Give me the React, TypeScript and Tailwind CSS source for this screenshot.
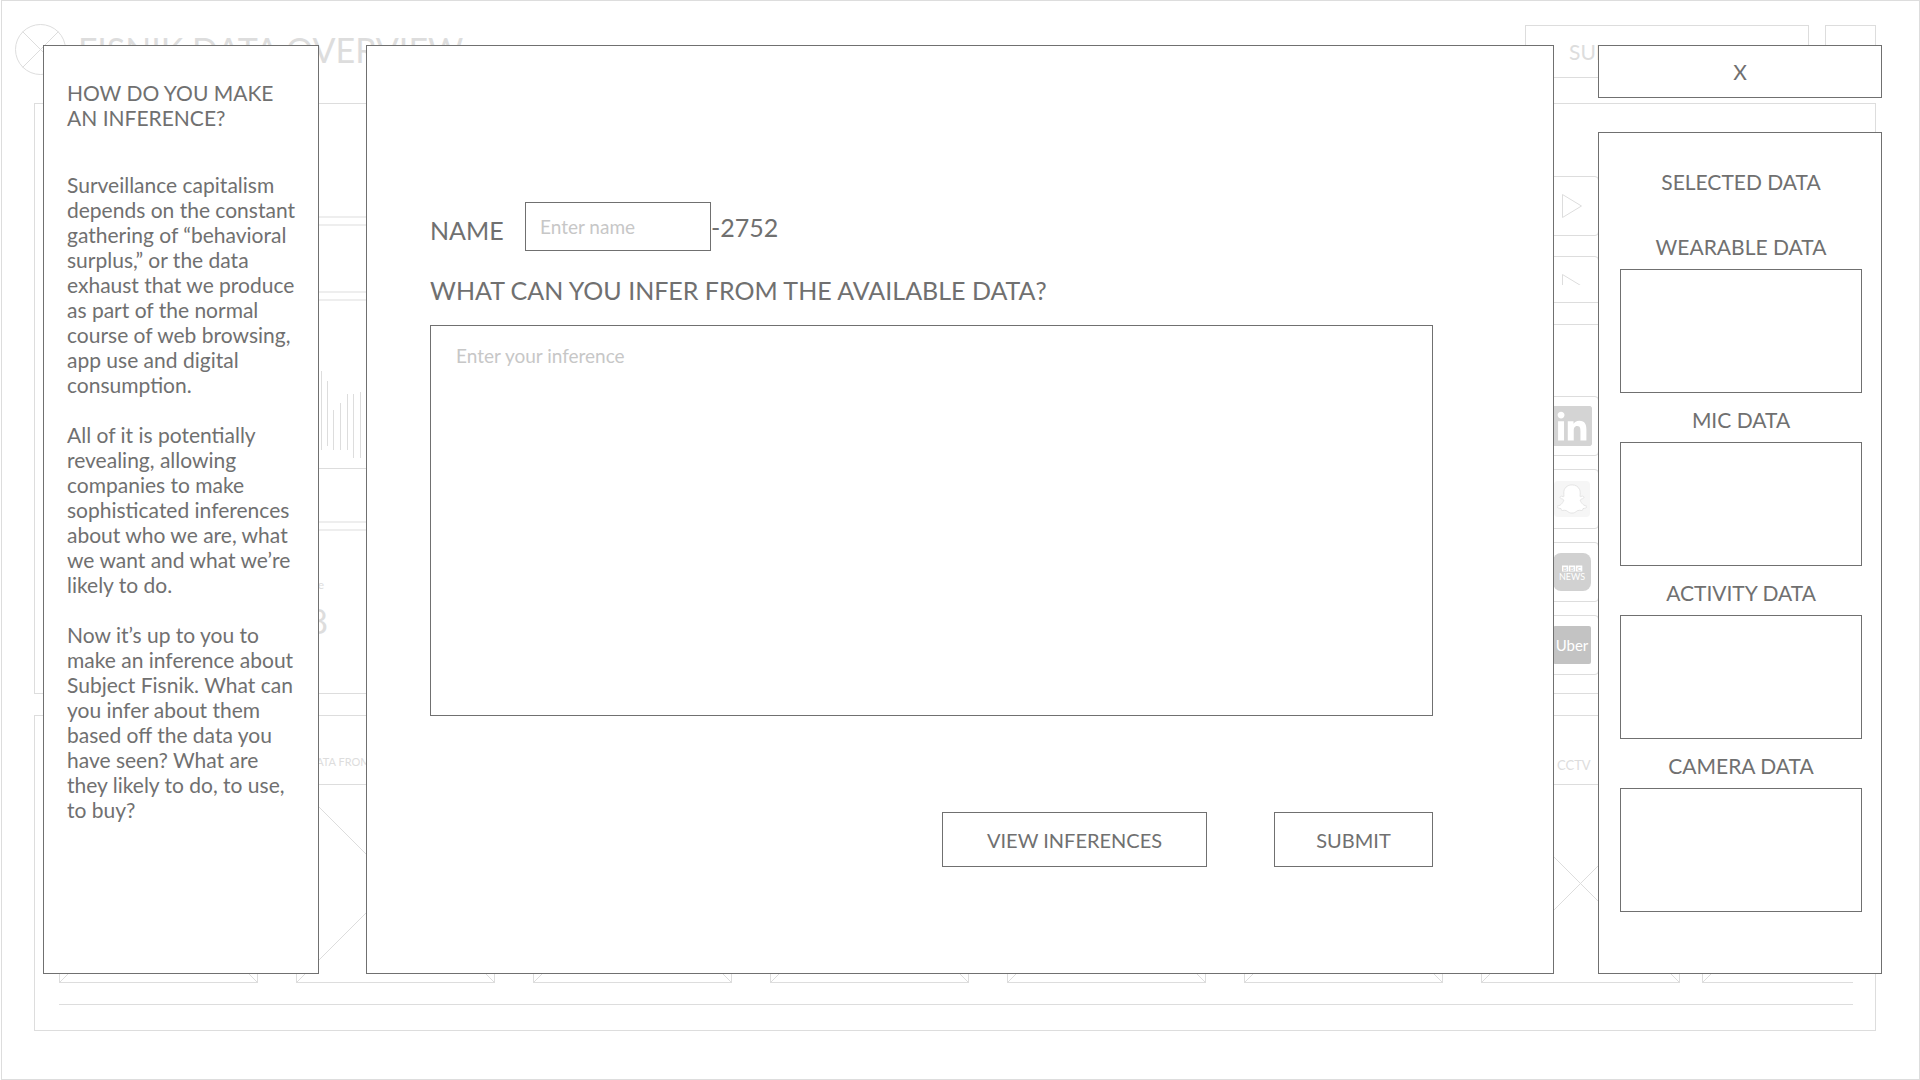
import { FaLinkedin, FaSnapchatGhost } from "react-icons/fa";

const waveBars = [
  { x: 259, top: 371, bottom: 450 },
  { x: 265, top: 381, bottom: 446 },
  { x: 271, top: 410, bottom: 450 },
  { x: 278, top: 403, bottom: 450 },
  { x: 285, top: 394, bottom: 450 },
  { x: 291, top: 394, bottom: 458 },
  { x: 298, top: 392, bottom: 458 },
];

const cameras = [
  { id: 1, label: "", labelClass: "" },
  { id: 2, label: "DATA FROM", labelClass: "pl-3 pt-[38px] text-[11px]" },
  { id: 3, label: "", labelClass: "" },
  { id: 4, label: "", labelClass: "" },
  { id: 5, label: "", labelClass: "" },
  { id: 6, label: "", labelClass: "" },
  { id: 7, label: "CCTV", labelClass: "pl-[76px] pt-10 text-[13px]" },
  { id: 8, label: "", labelClass: "" },
];

const selectedData = ["WEARABLE DATA", "MIC DATA", "ACTIVITY DATA", "CAMERA DATA"];

function PlayIcon() {
  return (
    <svg className="shrink-0" width="20" height="24" viewBox="0 0 20 24" fill="none" stroke="#dddddd">
      <path d="M0.5 0.5V23.5L19.5 12Z" />
    </svg>
  );
}

function BbcIcon() {
  return (
    <svg width="38" height="38" viewBox="0 0 38 38">
      <rect width="38" height="38" rx="8" fill="#d1d1d1" />
      <g fill="#ffffff">
        <rect x="9" y="12.5" width="6.3" height="6" />
        <rect x="16" y="12.5" width="6.3" height="6" />
        <rect x="23" y="12.5" width="6.3" height="6" />
      </g>
      <g fill="#d1d1d1" fontFamily="Lato, sans-serif" fontSize="6" fontWeight="700" textAnchor="middle">
        <text x="12.1" y="17.6">B</text>
        <text x="19.1" y="17.6">B</text>
        <text x="26.1" y="17.6">C</text>
      </g>
      <text x="19" y="26.5" fill="#ffffff" fontFamily="Lato, sans-serif" fontSize="9" textAnchor="middle">
        NEWS
      </text>
    </svg>
  );
}

function UberIcon() {
  return (
    <svg width="38" height="38" viewBox="0 0 38 38">
      <rect width="38" height="38" rx="2" fill="#c3c3c3" />
      <text x="19" y="25" fill="#ffffff" fontFamily="Lato, sans-serif" fontSize="15" textAnchor="middle">
        Uber
      </text>
    </svg>
  );
}

function SnapchatIcon() {
  return (
    <div className="flex size-9 items-center justify-center rounded bg-[#f6f6f6]">
      <FaSnapchatGhost size={30} color="#ffffff" stroke="#e2e2e2" strokeWidth={16} />
    </div>
  );
}

function Dashboard() {
  return (
    <div className="ml-px flex min-h-screen flex-col border border-[#dddddd] text-[#dddddd]">
      <header className="flex items-start pt-6 pl-[13px] pr-[43px]">
        <svg className="-mt-px" width="51" height="51" viewBox="0 0 51 51" fill="none" stroke="#dddddd">
          <circle cx="25.5" cy="25.5" r="25" />
          <path d="M7.5 7.5L43.5 43.5M43.5 7.5L7.5 43.5" />
        </svg>
        <h1 className="mt-[5px] ml-3 text-[34px] leading-10">FISNIK DATA OVERVIEW</h1>
        <button
          type="button"
          className="ml-auto h-[53px] w-[284px] border border-[#dddddd] pl-[43px] text-left text-[21px]"
        >
          SUBMIT
        </button>
        <div className="ml-4 h-[53px] w-[51px] border border-[#dddddd]" />
      </header>

      <section className="mt-[25px] mr-[43px] ml-8 flex h-[591px] justify-between border border-[#dddddd]">
        <div className="ml-[25px] flex w-[600px] flex-col gap-[6px]">
          <div className="h-[114px] border-x-2 border-b-2 border-[#eeeeee]" />
          <div className="h-[69px] border-2 border-[#eeeeee]" />
          <div className="h-[224px] border-2 border-[#eeeeee]">
            <div className="border-b border-[#dddddd]">
              <svg className="block" width="306" height="167" viewBox="0 301 306 167" stroke="#dddddd">
                {waveBars.map((bar) => (
                  <path key={bar.x} d={`M${bar.x + 0.5} ${bar.top}V${bar.bottom}`} />
                ))}
              </svg>
            </div>
          </div>
          <div className="flex-1 border-x-2 border-t-2 border-[#eeeeee] pt-[46px]">
            <div className="w-[266px] text-right">
              <p className="pr-1 text-[12px] leading-4">rate</p>
              <p className="mt-2 text-[34px] leading-10">78</p>
            </div>
          </div>
        </div>

        <div className="mr-[276px] w-[300px] pt-[72px]">
          <div className="flex h-[60px] items-center justify-end rounded border border-[#dddddd] pr-4">
            <PlayIcon />
          </div>
          <div className="mt-5 h-[47px] rounded-t border border-[#dddddd] pt-[17px] pr-4">
            <div className="flex h-[11px] items-start justify-end overflow-hidden">
              <PlayIcon />
            </div>
          </div>
          <div className="mt-[21px] flex flex-col gap-[13px] border-t border-[#dddddd] pt-[71px]">
            <div className="flex h-[60px] items-center justify-end rounded border border-[#dddddd] pr-[6px]">
              <div className="flex size-10 items-center justify-center overflow-hidden">
                <FaLinkedin className="shrink-0" size={46} color="#d4d4d4" />
              </div>
            </div>
            <div className="flex h-[60px] items-center justify-end rounded border border-[#dddddd] pr-[6px]">
              <div className="flex size-10 items-center justify-center">
                <SnapchatIcon />
              </div>
            </div>
            <div className="flex h-[60px] items-center justify-end rounded border border-[#dddddd] pr-[6px]">
              <div className="flex size-10 items-center justify-center">
                <BbcIcon />
              </div>
            </div>
            <div className="flex h-[60px] items-center justify-end rounded border border-[#dddddd] pr-[6px]">
              <div className="flex size-10 items-center justify-center">
                <UberIcon />
              </div>
            </div>
          </div>
        </div>
      </section>

      <section className="mt-[21px] mr-[43px] mb-12 ml-8 border border-[#dddddd] pr-[22px] pb-[25px] pl-6">
        <div className="flex gap-[38px] overflow-hidden">
          {cameras.map((camera) => (
            <figure key={camera.id} className="w-[199px] shrink-0 last:-ml-4">
              <figcaption className="h-[68px]">
                <p className={camera.labelClass}>{camera.label}</p>
              </figcaption>
              <svg className="block" width="199" height="199" viewBox="0 0 199 199" fill="none" stroke="#dddddd">
                <rect x="0.5" y="0.5" width="198" height="198" />
                <path d="M0 0L199 199M199 0L0 199" />
              </svg>
            </figure>
          ))}
        </div>
        <div className="mt-[21px] border-t border-[#dddddd]" />
      </section>
    </div>
  );
}

export default function App() {
  return (
    <div className="relative min-h-screen bg-white font-['Lato',sans-serif]">
      <Dashboard />

      <div className="absolute inset-0 flex pt-[45px] pr-[38px] pb-[106px] pl-[43px] text-[21px] leading-[25px] text-[#707070]">
        <aside className="w-[276px] shrink-0 border border-[#707070] bg-white pt-[34px] pr-[18px] pl-[23px]">
          <h2>
            HOW DO YOU MAKE
            <br />
            AN INFERENCE?
          </h2>
          <div className="mt-[42px] flex flex-col gap-[25px]">
            <p>
              Surveillance capitalism depends on the constant gathering of “behavioral surplus,” or the
              data exhaust that we produce as part of the normal course of web browsing, app use and
              digital consumption.
            </p>
            <p>
              All of it is potentially revealing, allowing companies to make sophisticated inferences
              about who we are, what we want and what we’re likely to do.
            </p>
            <p>
              Now it’s up to you to make an inference about Subject Fisnik. What can you infer about
              them based off the data you have seen? What are they likely to do, to use, to buy?
            </p>
          </div>
        </aside>

        <main className="ml-[47px] flex-1 border border-[#707070] bg-white pt-[156px] pr-[120px] pl-[63px]">
          <form>
            <div className="flex items-center text-[25px] leading-[30px]">
              <label className="w-[95px] pt-1.5" htmlFor="name">
                NAME
              </label>
              <input
                className="h-[49px] w-[186px] border border-[#707070] px-[14px] text-[19px] placeholder:text-[#c7c7c7]"
                type="text"
                id="name"
                name="name"
                placeholder="Enter name"
              />
              <span>-2752</span>
            </div>
            <label className="mt-6 block text-[25px] leading-[30px]" htmlFor="inference">
              WHAT CAN YOU INFER FROM THE AVAILABLE DATA?
            </label>
            <textarea
              className="mt-5 block h-[391px] w-full resize-none border border-[#707070] px-[25px] pt-[17px] text-[19px] placeholder:text-[#c7c7c7]"
              id="inference"
              name="inference"
              placeholder="Enter your inference"
            />
            <div className="mt-24 flex justify-end gap-[67px] text-[20px]">
              <button type="button" className="h-[55px] w-[265px] border border-[#707070] pt-0.5">
                VIEW INFERENCES
              </button>
              <button type="submit" className="h-[55px] w-[159px] border border-[#707070] pt-0.5">
                SUBMIT
              </button>
            </div>
          </form>
        </main>

        <div className="ml-[44px] flex w-[284px] shrink-0 flex-col gap-[34px]">
          <button type="button" className="h-[53px] border border-[#707070] bg-white">
            X
          </button>
          <aside className="flex-1 border border-[#707070] bg-white pt-9 pr-[19px] pl-[21px] text-center">
            <h2 className="mb-10">SELECTED DATA</h2>
            <div className="flex flex-col gap-[14px]">
              {selectedData.map((title) => (
                <section key={title}>
                  <h3>{title}</h3>
                  <div className="mt-[10px] h-[124px] border border-[#707070]" />
                </section>
              ))}
            </div>
          </aside>
        </div>
      </div>
    </div>
  );
}
